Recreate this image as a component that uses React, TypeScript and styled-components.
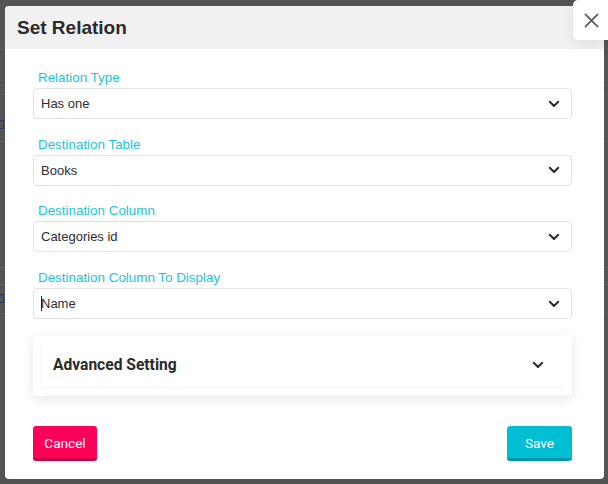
import React from 'react'
import styled, { createGlobalStyle } from 'styled-components'

const GlobalStyle = createGlobalStyle`
  html, body {
    margin: 0;
    padding: 0;
    background: #545454;
    font-family: "Liberation Sans", Arial, sans-serif;
  }
`

const fields = [
  { label: 'Relation Type', value: 'Has one' },
  { label: 'Destination Table', value: 'Books' },
  { label: 'Destination Column', value: 'Categories id' },
  { label: 'Destination Column To Display', value: 'Name', focused: true }
]

// faint rows of the page lying under the overlay
const backdropRows = [85, 94, 141, 267, 284, 313]
const backdropMarks = [120, 294]

const Chevron = ({ size = 12 }: { size?: number }) => (
  <svg width={size} height={size} viewBox="0 0 12 12" fill="none">
    <path
      d="M1.8 3.8 L6 8 L10.2 3.8"
      stroke="#2b2b2b"
      strokeWidth="2"
      strokeLinecap="round"
      strokeLinejoin="round"
    />
  </svg>
)

const App = () => {
  return (
    <Page>
      <GlobalStyle />
      <Backdrop>
        {backdropRows.map((y) => (
          <BackdropLine key={y} style={{ top: y }} />
        ))}
        {backdropMarks.map((y) => (
          <BackdropMark key={y} style={{ top: y }} />
        ))}
      </Backdrop>

      <Modal>
        <Header>
          <Title>Set Relation</Title>
        </Header>

        <Body>
          {fields.map((f) => (
            <Field key={f.label}>
              <Label>{f.label}</Label>
              <Select>
                <SelectValue>
                  {f.focused && <Caret />}
                  {f.value}
                </SelectValue>
                <Chevron />
              </Select>
            </Field>
          ))}

          <Accordion>
            <AccordionHead>
              <AccordionTitle>Advanced Setting</AccordionTitle>
              <Chevron />
            </AccordionHead>
          </Accordion>

          <Actions>
            <Button $tone="pink">Cancel</Button>
            <Button $tone="teal">Save</Button>
          </Actions>
        </Body>
      </Modal>

      <CloseButton aria-label="close">
        <svg width="15" height="15" viewBox="0 0 16 16">
          <path
            d="M1.5 1.5 L14.5 14.5 M14.5 1.5 L1.5 14.5"
            stroke="#5a5a5a"
            strokeWidth="1.8"
            strokeLinecap="round"
          />
        </svg>
      </CloseButton>
    </Page>
  )
}

const Page = styled.div`
  position: relative;
  width: 608px;
  height: 484px;
  overflow: hidden;
  padding: 6px 4px 0 5px;
  box-sizing: border-box;
`

const Backdrop = styled.div`
  position: absolute;
  inset: 0;
`

const BackdropLine = styled.div`
  position: absolute;
  left: 0;
  right: 0;
  height: 1px;
  background: #626262;
`

const BackdropMark = styled.div`
  position: absolute;
  left: -4px;
  width: 6px;
  height: 7px;
  border: 1.5px solid #2a3670;
`

const Modal = styled.div`
  position: relative;
  width: 599px;
  height: 473px;
  background: #fff;
  border-radius: 4px;
  overflow: hidden;
  display: flex;
  flex-direction: column;
`

const Header = styled.div`
  height: 43px;
  background: #f1f1f1;
  display: flex;
  align-items: center;
  padding-left: 12px;
`

const Title = styled.h2`
  margin: 0;
  font-size: 19px;
  font-weight: 700;
  color: #2b2b2b;
  padding-top: 1px;
`

const Body = styled.div`
  padding: 20px 32px 0 28px;
  display: flex;
  flex-direction: column;
`

const Field = styled.div`
  display: flex;
  flex-direction: column;
  margin-bottom: 16.7px;
`

const Label = styled.label`
  font-size: 13.4px;
  line-height: 16px;
  color: #1bc5d8;
  padding: 1px 0 0 5px;
  margin-bottom: 2px;
`

const Select = styled.div`
  height: 31px;
  box-sizing: border-box;
  border: 1px solid #e2e2e2;
  border-radius: 4px;
  display: flex;
  align-items: center;
  justify-content: space-between;
  padding: 0 11px 0 7px;
`

const SelectValue = styled.span`
  font-size: 13px;
  color: #2e2e2e;
  display: flex;
  align-items: center;
`

const Caret = styled.span`
  width: 1px;
  height: 15px;
  background: #222;
  margin-right: -1px;
`

const Accordion = styled.div`
  height: 61px;
  box-sizing: border-box;
  background: #fff;
  border-radius: 4px;
  box-shadow: 0 3px 12px rgba(0, 0, 0, 0.1);
  padding: 0 10px 10px 9px;
  margin-top: -0.8px;
`

const AccordionHead = styled.div`
  height: 51px;
  box-sizing: border-box;
  padding: 9px 18px 0 11px;
  display: flex;
  align-items: center;
  justify-content: space-between;
  box-shadow: 0 2px 3px rgba(0, 0, 0, 0.035);
`

const AccordionTitle = styled.span`
  font-family: Roboto, "Liberation Sans", sans-serif;
  font-weight: 700;
  font-size: 15.6px;
  color: #2b2b2b;
`

const Actions = styled.div`
  margin-top: 30px;
  display: flex;
  justify-content: space-between;
`

const Button = styled.button<{ $tone: 'pink' | 'teal' }>`
  height: 35px;
  min-width: 64px;
  padding: 2px 11px 0;
  border: none;
  border-radius: 3px;
  font-family: Roboto, "Liberation Sans", sans-serif;
  font-size: 13.6px;
  color: #fff;
  background: ${(p) => (p.$tone === 'pink' ? '#ff0058' : '#00bfd2')};
  border-bottom: 3px solid ${(p) => (p.$tone === 'pink' ? '#c8004a' : '#0098a8')};
  cursor: pointer;
  &:last-child {
    min-width: 65px;
  }
`

const CloseButton = styled.button`
  position: absolute;
  top: 0;
  right: 0;
  width: 35px;
  height: 40px;
  border: none;
  background: #fff;
  border-radius: 5px 0 0 5px;
  box-shadow: 0 4px 14px rgba(0, 0, 0, 0.08);
  display: flex;
  align-items: center;
  justify-content: center;
  padding: 0 0 0 2px;
  cursor: pointer;
`

export default App
